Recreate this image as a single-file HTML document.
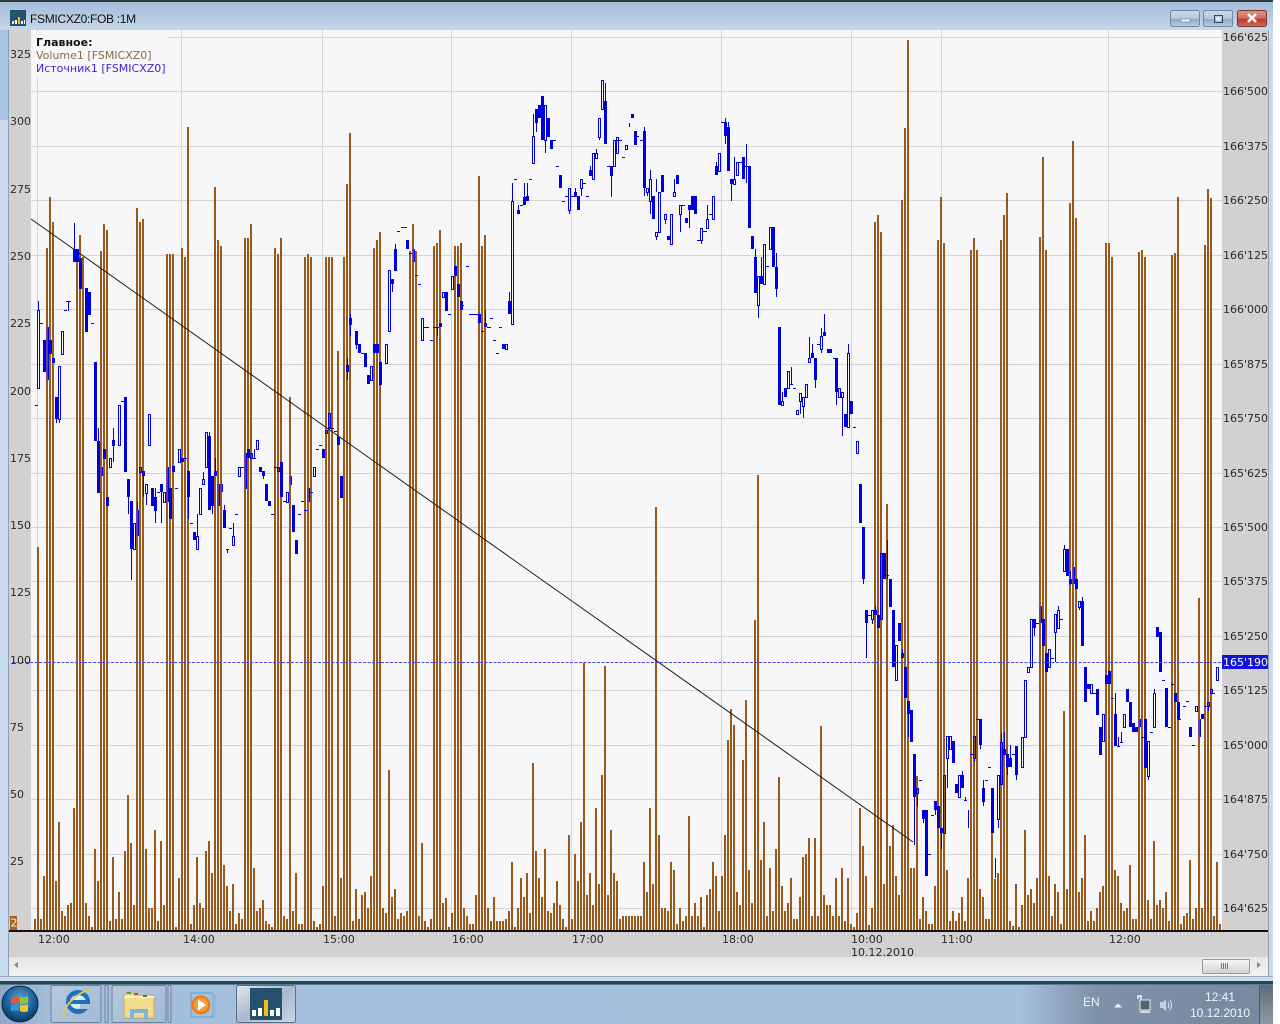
<!DOCTYPE html>
<html><head><meta charset="utf-8"><title>FSMICXZ0:FOB :1M</title>
<style>
html,body{margin:0;padding:0;background:#fff;width:1280px;height:1024px;overflow:hidden}
svg{display:block}
.ax{font-family:"DejaVu Sans",sans-serif;font-size:11px;fill:#2a2a2a}
.lg{font-family:"DejaVu Sans",sans-serif;font-size:11px}
.tb{font-family:"Liberation Sans",sans-serif;font-size:12px;fill:#f2f6fa}
</style></head><body>
<svg width="1280" height="1024" viewBox="0 0 1280 1024" xmlns="http://www.w3.org/2000/svg">
<defs>
<linearGradient id="tt" x1="0" y1="0" x2="0" y2="1"><stop offset="0" stop-color="#a3bdd9"/><stop offset="1" stop-color="#c6d8ea"/></linearGradient>
<linearGradient id="tbg" x1="0" y1="0" x2="1" y2="0"><stop offset="0" stop-color="#8ea8c6"/><stop offset=".04" stop-color="#a3bfdc"/><stop offset=".8" stop-color="#a7c1dc"/><stop offset=".86" stop-color="#7f92aa"/><stop offset="1" stop-color="#76889f"/></linearGradient>
<linearGradient id="btn" x1="0" y1="0" x2="0" y2="1"><stop offset="0" stop-color="#c9d9ea"/><stop offset=".5" stop-color="#b3c8df"/><stop offset=".55" stop-color="#8fa9c6"/><stop offset="1" stop-color="#b7cde3"/></linearGradient>
<linearGradient id="cls" x1="0" y1="0" x2="0" y2="1"><stop offset="0" stop-color="#e0968a"/><stop offset=".5" stop-color="#cf6a5c"/><stop offset=".55" stop-color="#b83a28"/><stop offset="1" stop-color="#d46a50"/></linearGradient>
<linearGradient id="sc" x1="0" y1="0" x2="0" y2="1"><stop offset="0" stop-color="#e6e6e6"/><stop offset="1" stop-color="#f2f2f2"/></linearGradient>
<linearGradient id="th" x1="0" y1="0" x2="0" y2="1"><stop offset="0" stop-color="#f6f6f6"/><stop offset=".5" stop-color="#e6e6e6"/><stop offset="1" stop-color="#cfcfcf"/></linearGradient>
<linearGradient id="act" x1="0" y1="0" x2="1" y2="1"><stop offset="0" stop-color="#dfe7ef"/><stop offset=".5" stop-color="#a9bacb"/><stop offset="1" stop-color="#c9d6e3"/></linearGradient>
<linearGradient id="ib" x1="0" y1="0" x2="1" y2="1"><stop offset="0" stop-color="#b6c9de"/><stop offset="1" stop-color="#a2bad4"/></linearGradient>
<linearGradient id="sd" x1="0" y1="0" x2="0" y2="1"><stop offset="0" stop-color="#5f6b77"/><stop offset="1" stop-color="#8c9aa8"/></linearGradient>
<radialGradient id="orb" cx=".5" cy=".35" r=".7"><stop offset="0" stop-color="#5aa0d0"/><stop offset=".6" stop-color="#1a5c94"/><stop offset="1" stop-color="#0a2c50"/></radialGradient>
</defs>

<!-- window frame -->
<rect x="0" y="0" width="1273" height="983" fill="#c8daec"/>
<rect x="0" y="0" width="1273" height="2" fill="#2c3a3c"/>
<rect x="0" y="2" width="1273" height="28" fill="url(#tt)"/>
<rect x="0" y="30" width="8" height="90" fill="#a9c4e3"/>
<rect x="8" y="30" width="1" height="946" fill="#8ea0b4"/>
<rect x="1268" y="30" width="1" height="946" fill="#8ea0b4"/>
<rect x="0" y="976" width="1273" height="1" fill="#97a8ba"/>
<rect x="0" y="981" width="1273" height="3" fill="#1f4a50"/>

<!-- title -->
<rect x="10" y="10" width="16" height="16" fill="#26506c"/>
<path d="M12 21h2v3h-2zM15 20h2v4h-2zM21 21h2v3h-2zM24 20h1v4h-1z" fill="#fff"/>
<path d="M18 17h2v7h-2z" fill="#f0c010"/>
<text x="30" y="23" font-family="Liberation Sans, sans-serif" font-size="12" letter-spacing="-.3" fill="#111">FSMICXZ0:FOB :1M</text>

<!-- window buttons -->
<rect x="1170.500" y="10.500" width="29" height="16" rx="2" fill="url(#btn)" stroke="#6f87a2"/>
<rect x="1203.500" y="10.500" width="29" height="16" rx="2" fill="url(#btn)" stroke="#6f87a2"/>
<rect x="1237.500" y="10.500" width="29" height="16" rx="2" fill="url(#cls)" stroke="#7a3a30"/>
<rect x="1181" y="19" width="9" height="3" fill="#eef3f8" stroke="#6a7f96" stroke-width=".6"/>
<rect x="1214.500" y="15.500" width="8" height="7" fill="none" stroke="#38485a"/><rect x="1216" y="17" width="5" height="4" fill="#dfe8f2"/>
<path d="M1248 14l8 8M1256 14l-8 8" stroke="#fff" stroke-width="2.600"/>

<!-- plot -->
<rect x="9" y="30" width="1259" height="927" fill="#d2d0d1"/>
<rect x="31" y="30" width="1191" height="901" fill="#f7f7f9"/>
<path stroke="#d5d5d6" stroke-width="1" shape-rendering="crispEdges" d="M31 37.500H1222M31 91.500H1222M31 146.500H1222M31 200.500H1222M31 255.500H1222M31 309.500H1222M31 364.500H1222M31 418.500H1222M31 473.500H1222M31 527.500H1222M31 581.500H1222M31 636.500H1222M31 690.500H1222M31 745.500H1222M31 799.500H1222M31 854.500H1222M31 908.500H1222M37.500 30V931M181.500 30V931M322.500 30V931M451.500 30V931M571.500 30V931M721.500 30V931M851.500 30V931M941.500 30V931M1108.500 30V931"/>
<rect x="31" y="32" width="137" height="45" fill="#f7f7f9"/>

<!-- volume bars -->
<path fill="none" stroke="#99591a" stroke-width="2" shape-rendering="crispEdges" d="M35 930V919M38 930V547M41 930V919M44 930V876M47 930V248M50 930V197M53 930V222M56 930V881M59 930V822M62 930V911M65 930V916M68 930V905M71 930V903M74 930V808M77 930V257M80 930V235M83 930V257M86 930V903M89 930V916M92 930V927M95 930V849M98 930V881M101 930V251M104 930V224M107 930V230M110 930V921M113 930V857M116 930V919M119 930V892M122 930V919M125 930V851M128 930V795M131 930V843M134 930V905M137 930V208M140 930V222M143 930V219M146 930V849M149 930V908M152 930V908M155 930V830M158 930V921M161 930V841M164 930V905M167 930V254M170 930V254M173 930V254M176 930V927M179 930V878M182 930V248M185 930V257M188 930V127M191 930V924M194 930V905M197 930V857M200 930V903M203 930V908M206 930V851M209 930V841M212 930V873M215 930V187M218 930V240M221 930V246M224 930V865M227 930V886M230 930V911M233 930V884M236 930V924M239 930V913M242 930V919M245 930V238M248 930V238M251 930V224M254 930V868M257 930V911M260 930V908M263 930V900M266 930V921M269 930V924M272 930V927M275 930V248M278 930V254M281 930V238M284 930V916M287 930V919M290 930V397M293 930V911M296 930V873M299 930V924M302 930V924M305 930V257M308 930V254M311 930V257M314 930V921M317 930V927M320 930V924M323 930V886M326 930V257M329 930V257M332 930V257M335 930V916M338 930V351M341 930V878M344 930V257M347 930V184M350 930V133M353 930V921M356 930V889M359 930V919M362 930V895M365 930V892M368 930V908M371 930V876M374 930V248M377 930V240M380 930V232M383 930V908M386 930V913M389 930V770M392 930V897M395 930V889M398 930V919M401 930V913M404 930V916M407 930V911M410 930V251M413 930V224M416 930V251M419 930V916M422 930V843M425 930V921M428 930V927M431 930V919M434 930V246M437 930V243M440 930V230M443 930V903M446 930V898M449 930V927M452 930V913M455 930V246M458 930V246M461 930V243M464 930V908M467 930V916M470 930V924M473 930V924M476 930V895M479 930V176M482 930V246M485 930V235M488 930V908M491 930V921M494 930V897M497 930V921M500 930V921M503 930V921M506 930V919M509 930V911M512 930V862M515 930V927M518 930V908M521 930V878M524 930V897M527 930V873M530 930V913M533 930V763M536 930V851M539 930V878M542 930V897M545 930V849M548 930V911M551 930V913M554 930V903M557 930V881M560 930V905M563 930V919M566 930V927M569 930V835M572 930V919M575 930V854M578 930V881M581 930V822M584 930V663M587 930V895M590 930V873M593 930V905M596 930V808M599 930V884M602 930V775M605 930V666M608 930V895M611 930V830M614 930V873M617 930V881M620 930V919M623 930V916M626 930V916M629 930V916M632 930V916M635 930V916M638 930V916M641 930V916M644 930V862M647 930V892M650 930V808M653 930V884M656 930V507M659 930V835M662 930V908M665 930V908M668 930V911M671 930V862M674 930V870M677 930V924M680 930V908M683 930V921M686 930V916M689 930V816M692 930V916M695 930V903M698 930V916M701 930V897M704 930V927M707 930V895M710 930V889M713 930V862M716 930V876M719 930V911M722 930V876M725 930V835M728 930V740M731 930V709M734 930V725M737 930V892M740 930V905M743 930V760M746 930V700M749 930V870M752 930V903M755 930V620M758 930V475M761 930V860M764 930V822M767 930V916M770 930V868M773 930V911M776 930V849M779 930V777M782 930V886M785 930V911M788 930V903M791 930V878M794 930V919M797 930V919M800 930V897M803 930V857M806 930V854M809 930V838M812 930V916M815 930V838M818 930V916M821 930V726M824 930V895M827 930V905M830 930V905M833 930V916M836 930V878M839 930V916M842 930V868M845 930V921M848 930V878M851 930V924M854 930V927M857 930V913M860 930V808M863 930V846M866 930V876M869 930V925M872 930V908M875 930V222M878 930V215M881 930V232M884 930V884M887 930V504M890 930V846M893 930V825M896 930V876M899 930V895M902 930V200M905 930V128M908 930V40M911 930V868M914 930V868M917 930V776M920 930V919M923 930V897M926 930V911M929 930V924M932 930V924M935 930V886M938 930V240M941 930V197M944 930V243M947 930V870M950 930V921M953 930V911M956 930V921M959 930V913M962 930V897M965 930V921M968 930V878M971 930V250M974 930V238M977 930V250M980 930V889M983 930V897M986 930V919M989 930V919M992 930V833M995 930V879M998 930V873M1001 930V240M1004 930V215M1007 930V193M1010 930V921M1013 930V926M1016 930V884M1019 930V927M1022 930V905M1025 930V830M1028 930V895M1031 930V889M1034 930V903M1037 930V878M1040 930V237M1043 930V157M1046 930V250M1049 930V876M1052 930V916M1055 930V884M1058 930V892M1061 930V924M1064 930V711M1067 930V889M1070 930V203M1073 930V141M1076 930V218M1079 930V892M1082 930V878M1085 930V835M1088 930V921M1091 930V911M1094 930V921M1097 930V908M1100 930V892M1103 930V886M1106 930V243M1109 930V243M1112 930V257M1115 930V870M1118 930V876M1121 930V903M1124 930V911M1127 930V908M1130 930V865M1133 930V919M1136 930V919M1139 930V252M1142 930V250M1145 930V257M1148 930V900M1151 930V919M1154 930V841M1157 930V905M1160 930V900M1163 930V908M1166 930V892M1169 930V921M1172 930V255M1175 930V253M1178 930V197M1181 930V924M1184 930V916M1187 930V913M1190 930V860M1193 930V919M1196 930V908M1199 930V598M1202 930V908M1205 930V245M1208 930V189M1211 930V198M1214 930V916M1217 930V862M1220 930V924"/>

<!-- trend line -->
<line x1="31" y1="219" x2="913" y2="842" stroke="#1c1c1c" stroke-width="1"/>

<!-- candles: filled -->
<path fill="#0000dc" shape-rendering="crispEdges" d="M43 340h3V372h-3zM46 327h3V380h-3zM49 340h3V354h-3zM52 358h3V363h-3zM55 397h3V419h-3zM73 249h3V262h-3zM76 249h3V262h-3zM79 258h3V289h-3zM85 288h3V332h-3zM88 292h3V315h-3zM94 362h3V441h-3zM97 441h3V493h-3zM100 467h3V476h-3zM103 449h3V459h-3zM106 497h3V506h-3zM124 397h3V472h-3zM127 479h3V497h-3zM130 501h3V549h-3zM136 510h3V536h-3zM142 471h3V476h-3zM151 488h3V506h-3zM160 484h3V492h-3zM166 467h3V502h-3zM169 488h3V519h-3zM172 466h3V472h-3zM181 458h3V462h-3zM187 471h3V497h-3zM193 532h3V540h-3zM208 436h3V510h-3zM211 476h3V506h-3zM214 471h3V476h-3zM217 484h3V506h-3zM220 484h3V492h-3zM223 510h3V528h-3zM244 453h3V489h-3zM247 449h3V458h-3zM259 467h3V472h-3zM262 471h3V476h-3zM265 484h3V501h-3zM268 501h3V506h-3zM280 462h3V497h-3zM289 476h3V485h-3zM292 505h3V532h-3zM295 540h3V554h-3zM307 488h3V502h-3zM322 449h3V458h-3zM337 437h3V445h-3zM340 476h3V498h-3zM346 365h3V372h-3zM355 331h3V345h-3zM358 344h3V353h-3zM364 353h3V367h-3zM367 375h3V384h-3zM373 344h3V353h-3zM376 344h3V353h-3zM379 362h3V385h-3zM391 279h3V284h-3zM394 249h3V271h-3zM406 240h3V249h-3zM412 249h3V262h-3zM439 323h3V327h-3zM445 292h3V311h-3zM454 266h3V276h-3zM457 284h3V297h-3zM460 301h3V310h-3zM478 314h3V323h-3zM484 323h3V327h-3zM502 344h3V349h-3zM508 301h3V314h-3zM517 210h3V214h-3zM523 197h3V205h-3zM526 196h3V201h-3zM535 109h3V123h-3zM538 105h3V118h-3zM541 96h3V140h-3zM547 118h3V137h-3zM550 140h3V149h-3zM559 175h3V188h-3zM574 192h3V196h-3zM577 196h3V210h-3zM589 170h3V176h-3zM604 101h3V144h-3zM610 166h3V176h-3zM631 114h3V118h-3zM634 131h3V145h-3zM643 131h3V188h-3zM652 196h3V219h-3zM661 175h3V192h-3zM667 236h3V240h-3zM676 175h3V184h-3zM685 218h3V223h-3zM688 205h3V210h-3zM691 196h3V210h-3zM694 196h3V214h-3zM715 166h3V175h-3zM724 122h3V136h-3zM727 127h3V171h-3zM730 179h3V184h-3zM742 157h3V179h-3zM748 166h3V228h-3zM751 236h3V249h-3zM754 257h3V293h-3zM760 276h3V284h-3zM772 227h3V267h-3zM775 267h3V289h-3zM778 327h3V405h-3zM784 388h3V397h-3zM811 353h3V358h-3zM814 358h3V380h-3zM823 332h3V336h-3zM827 349h5V353h-5zM835 358h3V392h-3zM844 414h3V427h-3zM850 401h3V414h-3zM859 484h3V523h-3zM862 527h3V579h-3zM865 610h3V623h-3zM874 610h3V615h-3zM877 615h3V628h-3zM883 553h3V579h-3zM889 579h3V607h-3zM892 610h3V667h-3zM898 623h3V641h-3zM901 653h3V658h-3zM904 667h3V698h-3zM907 701h3V714h-3zM910 710h3V742h-3zM913 754h3V797h-3zM922 810h3V819h-3zM925 810h3V876h-3zM934 801h3V810h-3zM937 806h3V828h-3zM940 828h3V833h-3zM952 741h3V763h-3zM955 784h3V793h-3zM961 775h3V788h-3zM979 719h3V745h-3zM982 788h3V802h-3zM991 788h3V833h-3zM1003 749h3V755h-3zM1006 754h3V767h-3zM1009 758h3V767h-3zM1015 746h3V775h-3zM1033 619h3V628h-3zM1039 606h3V623h-3zM1042 619h3V646h-3zM1045 653h3V672h-3zM1066 549h3V576h-3zM1069 579h3V584h-3zM1072 567h3V584h-3zM1075 579h3V589h-3zM1081 601h3V646h-3zM1084 667h3V702h-3zM1087 684h3V689h-3zM1096 689h3V715h-3zM1099 727h3V755h-3zM1105 675h3V684h-3zM1108 671h3V684h-3zM1114 714h3V746h-3zM1126 689h3V702h-3zM1129 702h3V727h-3zM1132 723h3V732h-3zM1135 727h3V732h-3zM1138 719h3V727h-3zM1144 719h3V768h-3zM1156 627h3V637h-3zM1159 632h3V672h-3zM1165 688h3V727h-3zM1174 693h3V702h-3zM1177 702h3V719h-3zM1189 727h3V737h-3zM1198 719h3V737h-3zM1201 714h3V719h-3z"/>
<!-- candle centres under the bars -->
<path fill="#6a3c92" shape-rendering="crispEdges" d="M46 327h2V380h-2zM100 467h2V476h-2zM136 510h2V536h-2zM166 467h2V502h-2zM217 484h2V506h-2zM220 484h2V492h-2zM244 453h2V489h-2zM289 476h2V485h-2zM307 488h2V502h-2zM412 249h2V262h-2zM1039 606h2V623h-2zM1072 567h2V584h-2zM1138 719h2V727h-2zM1198 719h2V737h-2z"/>
<!-- candles: hollow -->
<path fill="none" stroke="#0000dc" stroke-width="1" shape-rendering="crispEdges" d="M37.500 310.500h2V388.500h-2zM61.500 331.500h2V354.500h-2zM58.500 366.500h2V419.500h-2zM109.500 458.500h2V467.500h-2zM112.500 440.500h2V445.500h-2zM118.500 405.500h2V445.500h-2zM133.500 523.500h2V549.500h-2zM139.500 467.500h2V472.500h-2zM145.500 484.500h2V493.500h-2zM148.500 414.500h2V445.500h-2zM154.500 497.500h2V510.500h-2zM163.500 492.500h2V502.500h-2zM178.500 449.500h2V462.500h-2zM196.500 536.500h2V549.500h-2zM199.500 488.500h2V514.500h-2zM202.500 479.500h2V484.500h-2zM205.500 432.500h2V467.500h-2zM232.500 536.500h2V545.500h-2zM238.500 467.500h2V476.500h-2zM250.500 453.500h2V458.500h-2zM256.500 440.500h2V449.500h-2zM277.500 467.500h2V471.500h-2zM286.500 492.500h2V502.500h-2zM313.500 467.500h2V476.500h-2zM325.500 430.500h2V433.500h-2zM328.500 413.500h2V428.500h-2zM349.500 318.500h2V324.500h-2zM370.500 366.500h2V380.500h-2zM385.500 344.500h2V363.500h-2zM388.500 270.500h2V331.500h-2zM421.500 318.500h2V340.500h-2zM442.500 292.500h2V297.500h-2zM451.500 276.500h2V289.500h-2zM505.500 344.500h2V349.500h-2zM511.500 201.500h2V324.500h-2zM532.500 136.500h2V163.500h-2zM544.500 105.500h2V140.500h-2zM568.500 188.500h2V210.500h-2zM580.500 179.500h2V188.500h-2zM592.500 153.500h2V179.500h-2zM595.500 153.500h2V158.500h-2zM598.500 118.500h2V137.500h-2zM601.500 80.500h2V109.500h-2zM613.500 140.500h2V166.500h-2zM616.500 137.500h2V153.500h-2zM625.500 145.500h2V149.500h-2zM646.500 188.500h2V192.500h-2zM649.500 179.500h2V201.500h-2zM655.500 232.500h2V236.500h-2zM658.500 192.500h2V232.500h-2zM664.500 214.500h2V219.500h-2zM670.500 214.500h2V244.500h-2zM673.500 192.500h2V196.500h-2zM679.500 205.500h2V214.500h-2zM700.500 228.500h2V240.500h-2zM706.500 219.500h2V228.500h-2zM712.500 196.500h2V219.500h-2zM718.500 153.500h2V171.500h-2zM733.500 179.500h2V184.500h-2zM736.500 162.500h2V175.500h-2zM757.500 276.500h2V305.500h-2zM763.500 244.500h2V284.500h-2zM769.500 227.500h2V249.500h-2zM781.500 401.500h2V405.500h-2zM787.500 371.500h2V388.500h-2zM796.500 410.500h2V414.500h-2zM799.500 393.500h2V401.500h-2zM802.500 397.500h2V406.500h-2zM805.500 384.500h2V397.500h-2zM808.500 358.500h2V362.500h-2zM820.500 336.500h2V349.500h-2zM838.500 388.500h2V397.500h-2zM841.500 392.500h2V397.500h-2zM847.500 353.500h2V427.500h-2zM856.500 441.500h2V453.500h-2zM871.500 610.500h2V619.500h-2zM880.500 553.500h2V619.500h-2zM895.500 645.500h2V680.500h-2zM916.500 788.500h2V793.500h-2zM943.500 775.500h2V833.500h-2zM946.500 736.500h2V758.500h-2zM949.500 736.500h2V749.500h-2zM958.500 775.500h2V797.500h-2zM973.500 736.500h2V758.500h-2zM997.500 775.500h2V819.500h-2zM1000.500 742.500h2V784.500h-2zM1021.500 737.500h2V767.500h-2zM1024.500 680.500h2V737.500h-2zM1027.500 667.500h2V672.500h-2zM1030.500 619.500h2V667.500h-2zM1048.500 649.500h2V667.500h-2zM1054.500 614.500h2V632.500h-2zM1057.500 610.500h2V628.500h-2zM1063.500 549.500h2V571.500h-2zM1078.500 601.500h2V607.500h-2zM1090.500 684.500h2V693.500h-2zM1102.500 714.500h2V741.500h-2zM1123.500 714.500h2V727.500h-2zM1147.500 741.500h2V776.500h-2zM1153.500 693.500h2V727.500h-2zM1195.500 706.500h2V711.500h-2zM1207.500 702.500h2V706.500h-2zM1210.500 689.500h2V693.500h-2zM1216.500 667.500h2V680.500h-2z"/>
<!-- wicks and ticks -->
<path fill="none" stroke="#0000dc" stroke-width="1" shape-rendering="crispEdges" d="M38.500 301V310M56.500 419V423M59.500 419V423M68.500 301V311M66 301.500h5M74.500 223V249M98.500 428V441M113.500 428V462M128.500 497V514M131.500 549V580M137.500 502V510M143.500 476V497M146.500 493V505M155.500 488V523M161.500 492V523M188.500 497V519M197.500 514V536M203.500 472V479M209.500 432V436M212.500 506V514M215.500 458V471M224.500 505V510M233.500 523V536M227.500 549V553M254.500 449V458M263.500 476V479M347.500 358V380M350.500 314V336M356.500 345V349M392.500 284V292M395.500 244V249M437.500 327V336M485.500 310V323M509.500 292V301M512.500 183V201M518.500 205V210M524.500 183V197M527.500 183V196M533.500 114V136M536.500 123V132M545.500 140V153M569.500 210V214M575.500 188V192M581.500 188V196M590.500 166V170M596.500 149V153M599.500 137V140M605.500 83V101M611.500 176V197M629.500 123V127M644.500 127V131M644.500 188V196M647.500 192V196M650.500 170V179M650.500 201V214M656.500 179V192M656.500 236V240M665.500 219V224M674.500 179V192M680.500 214V232M689.500 210V228M701.500 240V244M707.500 205V219M716.500 162V166M725.500 118V122M725.500 136V144M728.500 122V127M731.500 184V201M734.500 157V179M746.500 144V183M755.500 249V257M758.500 305V318M761.500 257V276M776.500 253V267M776.500 289V297M782.500 392V401M791.500 367V384M800.500 401V414M803.500 406V418M809.500 337V358M812.500 344V353M815.500 380V388M821.500 328V336M821.500 349V353M824.500 314V332M836.500 392V405M842.500 397V436M848.500 344V353M863.500 579V584M866.500 623V658M872.500 619V624M875.500 606V610M887.500 540V579M902.500 649V653M908.500 714V737M914.500 797V845M917.500 793V806M923.500 819V823M935.500 810V815M941.500 833V849M947.500 758V788M962.500 771V775M965.500 797V801M968.500 810V828M974.500 758V762M980.500 745V749M983.500 780V788M983.500 802V806M995.500 858V878M998.500 819V828M1001.500 733V742M1004.500 732V749M1007.500 767V775M1010.500 745V758M1016.500 775V780M1034.500 628V636M1055.500 632V662M1058.500 606V610M1064.500 545V549M1070.500 571V585M1079.500 607V610M1082.500 597V601M1115.500 693V714M1118.500 737V746M1121.500 732V742M1148.500 776V780M1154.500 689V693M1208.500 706V711M35 405.500h3M40 323.500h3M64 310.500h3M91 323.500h3M121 401.500h3M157 492.500h3M175 488.500h3M184 458.500h3M190 523.500h3M226 549.500h3M229 528.500h3M235 514.500h3M241 467.500h3M253 458.500h3M271 514.500h3M274 467.500h3M283 501.500h3M298 514.500h3M301 501.500h3M304 510.500h3M310 492.500h3M316 449.500h3M319 445.500h3M331 428.500h3M334 431.500h3M361 353.500h3M397 231.500h3M401 227.500h6M409 253.500h3M415 275.500h3M418 284.500h3M424 327.500h5M430 340.500h3M433 327.500h6M448 314.500h3M460 305.500h4M466 266.500h3M469 314.500h9M481 331.500h3M487 327.500h4M490 318.500h3M493 340.500h3M496 353.500h3M499 327.500h3M514 179.500h3M520 205.500h3M529 179.500h3M551 140.500h5M556 166.500h3M562 201.500h3M565 196.500h3M571 196.500h7M582 183.500h4M586 196.500h3M607 166.500h3M617 140.500h5M622 157.500h3M636 136.500h3M640 140.500h3M680 205.500h5M697 240.500h3M702 231.500h5M709 214.500h3M721 122.500h3M739 162.500h3M745 166.500h3M766 266.500h3M790 384.500h3M793 388.500h3M817 344.500h3M833 358.500h3M853 427.500h3M868 615.500h3M886 575.500h3M919 780.500h3M926 854.500h5M931 815.500h3M964 800.500h3M970 754.500h3M976 719.500h3M985 780.500h3M988 767.500h3M1012 754.500h3M1036 623.500h3M1051 658.500h3M1060 619.500h3M1093 693.500h3M1111 698.500h3M1117 746.500h3M1120 742.500h3M1141 737.500h3M1150 732.500h3M1162 680.500h3M1168 727.500h3M1171 684.500h3M1177 719.500h4M1183 706.500h3M1186 701.500h3M1192 745.500h3M1204 706.500h3M1211 693.500h4"/>

<!-- current price line -->
<line x1="12" y1="662.500" x2="1222" y2="662.500" stroke="#4a4ae0" stroke-width="1" stroke-dasharray="3 1.500"/>

<!-- legend -->
<text class="lg" x="36" y="46" font-weight="bold" fill="#111">Главное:</text>
<text class="lg" x="36" y="59" fill="#8c6a3e">Volume1 [FSMICXZ0]</text>
<text class="lg" x="36" y="72" fill="#3a28d8">Источник1 [FSMICXZ0]</text>

<!-- axis line -->
<rect x="9" y="930" width="1259" height="2" fill="#111"/>

<!-- left axis -->
<g class="ax">
<text x="10" y="58">325</text><text x="10" y="125">300</text><text x="10" y="193">275</text><text x="10" y="260">250</text><text x="10" y="327">225</text><text x="10" y="395">200</text><text x="10" y="462">175</text><text x="10" y="529">150</text><text x="10" y="596">125</text><text x="10" y="664">100</text><text x="10" y="731">75</text><text x="10" y="798">50</text><text x="10" y="865">25</text>
</g>
<rect x="10" y="916" width="7" height="14" fill="#a8641e"/>
<text x="10.500" y="926.500" font-family="DejaVu Sans, sans-serif" font-size="11" fill="#f2ead8">2</text>

<!-- right axis -->
<g class="ax">
<text x="1223" y="41">166'625</text><text x="1223" y="95">166'500</text><text x="1223" y="150">166'375</text><text x="1223" y="204">166'250</text><text x="1223" y="259">166'125</text><text x="1223" y="313">166'000</text><text x="1223" y="368">165'875</text><text x="1223" y="422">165'750</text><text x="1223" y="477">165'625</text><text x="1223" y="531">165'500</text><text x="1223" y="585">165'375</text><text x="1223" y="640">165'250</text><text x="1223" y="694">165'125</text><text x="1223" y="749">165'000</text><text x="1223" y="803">164'875</text><text x="1223" y="858">164'750</text><text x="1223" y="912">164'625</text>
</g>
<rect x="1222" y="655" width="46" height="14" fill="#1414d8"/>
<text x="1223" y="666" font-family="DejaVu Sans, sans-serif" font-size="11" fill="#fff">165'190</text>

<!-- time axis -->
<g class="ax">
<text x="38" y="943">12:00</text><text x="183" y="943">14:00</text><text x="323" y="943">15:00</text><text x="452" y="943">16:00</text><text x="572" y="943">17:00</text><text x="722" y="943">18:00</text><text x="851" y="943">10:00</text><text x="941" y="943">11:00</text><text x="1109" y="943">12:00</text>
<text x="851" y="956">10.12.2010</text>
</g>

<!-- scrollbar -->
<rect x="9" y="957" width="1259" height="19" fill="url(#sc)"/>
<path d="M14 965l4-3v6z" fill="#8a8a8a"/>
<path d="M1261 965l-4-3v6z" fill="#8a8a8a"/>
<rect x="1202.500" y="959.500" width="47" height="14" rx="1" fill="url(#th)" stroke="#9a9a9a"/>
<path d="M1221.500 963v6M1223.500 963v6M1225.500 963v6M1227.500 963v6" stroke="#777" stroke-width="1"/>

<!-- taskbar -->
<rect x="0" y="984" width="1273" height="40" fill="url(#tbg)"/>
<rect x="0" y="984" width="1273" height="1" fill="#5f7890"/>
<!-- start orb -->
<circle cx="20" cy="1004" r="18" fill="url(#orb)" stroke="#0c2a44"/>
<path d="M11 998q4-2 8-1v6q-4-1-8 1z" fill="#e8563a"/>
<path d="M20 997q4 1 8-1v7q-4 2-8 1z" fill="#8cc63e"/>
<path d="M11 1005q4-2 8-1v7q-4-1-8 0z" fill="#2f96e0"/>
<path d="M20 1005q4 1 8-1v7q-4 2-8 0z" fill="#f5c52c"/>
<!-- IE button -->
<rect x="51" y="985.500" width="50" height="37" rx="2" fill="url(#ib)" stroke="#6f8199"/>
<rect x="105" y="985.500" width="3" height="37" rx="1" fill="url(#ib)" stroke="#6f8199"/>
<ellipse cx="78" cy="1002" rx="12" ry="12" fill="#1e6fc0"/>
<ellipse cx="78" cy="1002" rx="8" ry="7" fill="#d8ecfa"/>
<rect x="68" y="1000" width="22" height="4" fill="#1e6fc0"/>
<rect x="80" y="1004" width="12" height="5" fill="#a9c0d9"/>
<path d="M64 1018C60 1010 76 992 90 990" fill="none" stroke="#e8c850" stroke-width="1.800"/>
<!-- folder button -->
<rect x="112" y="985.500" width="54" height="37" rx="2" fill="url(#ib)" stroke="#6f8199"/>
<rect x="168" y="985.500" width="3" height="37" rx="1" fill="url(#ib)" stroke="#6f8199"/>
<path d="M124 1018v-22l2-3h9l2 2h15l2 3v20z" fill="#f1dc8c" stroke="#c8a850"/>
<rect x="124" y="996" width="30" height="2" fill="#fff4c0"/>
<rect x="127" y="992" width="4" height="2" fill="#44a040"/><rect x="134" y="993" width="4" height="2" fill="#c84030"/><rect x="143" y="995" width="4" height="2" fill="#3070c0"/>
<path d="M130 1019v-10h18v10h-4v-6h-10v6z" fill="#7fb4e0"/>
<!-- media player -->
<rect x="191" y="993" width="22" height="24" fill="#9ec4e4" stroke="#6c9cc4"/>
<rect x="213" y="995" width="3" height="20" fill="#8fb8da"/>
<circle cx="201" cy="1005" r="9.500" fill="#ec7a20"/>
<circle cx="201" cy="1005" r="7" fill="#f6a03c"/>
<path d="M198 999.500l8 5.500-8 5.500z" fill="#fff"/>
<!-- active button -->
<rect x="236.500" y="985.500" width="59" height="37" rx="2" fill="url(#act)" stroke="#5e6f82"/>
<rect x="250" y="988" width="32" height="32" fill="#26506c"/>
<path d="M252 1010h4v6h-4zM258 1008h4v8h-4zM270 1010h4v6h-4zM276 1008h4v8h-4z" fill="#fff"/>
<path d="M264 1000h4v16h-4z" fill="#f0c010"/>
<!-- tray -->
<text x="1083" y="1006" font-family="Liberation Sans, sans-serif" font-size="12" fill="#eef3f8">EN</text>
<path d="M1114 1007.500l4-4 4 4z" fill="#f0f4f8"/>
<rect x="1140" y="1000" width="10" height="10" fill="#56626e" stroke="#e8eef4"/>
<path d="M1138 999v-3h3v4M1140 1012h10" stroke="#f0f4f8" stroke-width="1.500" fill="none"/>
<path d="M1160 1002h3l3-3v12l-3-3h-3z" fill="#c8d2dc"/>
<path d="M1168 1002q2 3 0 6M1170 1000q3 5 0 10" stroke="#dfe6ee" fill="none"/>
<g class="tb" text-anchor="middle">
<text x="1220" y="1001">12:41</text>
<text x="1220" y="1017">10.12.2010</text>
</g>
<rect x="1259" y="985" width="14" height="39" fill="url(#sd)"/>
<rect x="1259" y="985" width="1" height="39" fill="#4e5a66"/>
<rect x="1273" y="0" width="7" height="1024" fill="#fff"/>
</svg>
</body></html>
